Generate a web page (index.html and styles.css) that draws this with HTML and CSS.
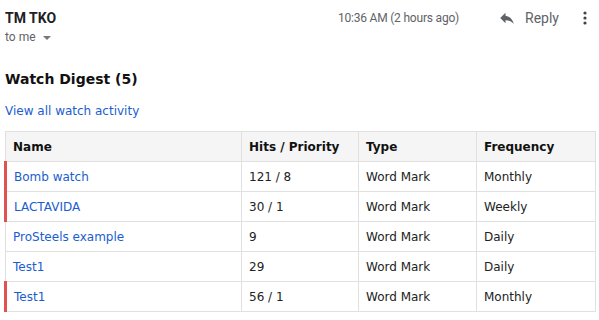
FILE: index.html
```html
<!DOCTYPE html>
<html>
<head>
<meta charset="utf-8">
<link rel="stylesheet" href="styles.css">
</head>
<body>
<div class="mail-head">
  <div class="sender">
    <div class="sender-name">TM TKO</div>
    <div class="to-me">to me <span class="caret"></span></div>
  </div>
  <div class="head-right">
    <span class="time">10:36 AM (2 hours ago)</span>
    <span class="reply">
      <svg class="reply-icon" width="18" height="18" viewBox="0 0 24 24"><path d="M10 9V5l-7 7 7 7v-4.1c5 0 8.5 1.6 11 5.1-1-5-4-10-11-11z" fill="#5f6368"/></svg>
      Reply
    </span>
    <svg class="more" width="4" height="16" viewBox="0 0 4 16"><circle cx="2" cy="3" r="1.6" fill="#444"/><circle cx="2" cy="8" r="1.6" fill="#444"/><circle cx="2" cy="13" r="1.6" fill="#444"/></svg>
  </div>
</div>
<div class="digest">
  <h1 class="title">Watch Digest (5)</h1>
  <a class="view-all" href="#">View all watch activity</a>
  <table class="watch-table">
    <colgroup><col class="c1"><col class="c2"><col class="c3"><col class="c4"></colgroup>
    <thead>
      <tr><th>Name</th><th>Hits / Priority</th><th>Type</th><th>Frequency</th></tr>
    </thead>
    <tbody>
      <tr class="flag"><td><a href="#">Bomb watch</a></td><td>121 / 8</td><td>Word Mark</td><td>Monthly</td></tr>
      <tr class="flag"><td><a href="#">LACTAVIDA</a></td><td>30 / 1</td><td>Word Mark</td><td>Weekly</td></tr>
      <tr><td><a href="#">ProSteels example</a></td><td>9</td><td>Word Mark</td><td>Daily</td></tr>
      <tr><td><a href="#">Test1</a></td><td>29</td><td>Word Mark</td><td>Daily</td></tr>
      <tr class="flag"><td><a href="#">Test1</a></td><td>56 / 1</td><td>Word Mark</td><td>Monthly</td></tr>
    </tbody>
  </table>
</div>
</body>
</html>
```
FILE: styles.css
```css
body {
  margin: 0;
  padding: 0 5px;
  background: #fff;
  font-family: Roboto, Arial, sans-serif;
}
.mail-head {
  display: flex;
  justify-content: space-between;
  align-items: flex-start;
  padding-top: 9px;
}
.sender-name {
  font-size: 14px;
  font-weight: bold;
  color: #202124;
  line-height: 18px;
}
.to-me {
  font-size: 12px;
  color: #5f6368;
  line-height: 20px;
}
.caret {
  display: inline-block;
  width: 0;
  height: 0;
  border-left: 4px solid transparent;
  border-right: 4px solid transparent;
  border-top: 4px solid #777;
  margin-left: 4px;
  vertical-align: middle;
}
.head-right {
  display: flex;
  align-items: center;
  height: 18px;
  padding-right: 7px;
}
.time {
  font-size: 12px;
  color: #5f6368;
  letter-spacing: -0.2px;
}
.reply {
  display: flex;
  align-items: center;
  gap: 9px;
  font-size: 14px;
  color: #5f6368;
  margin-left: 39px;
}
.more {
  margin-left: 24px;
}
.digest {
  font-family: Verdana, "DejaVu Sans", sans-serif;
}
.title {
  font-size: 14px;
  font-weight: bold;
  margin: 22px 0 0;
  line-height: 20px;
  color: #111;
}
.view-all {
  display: block;
  margin-top: 14px;
  font-size: 12px;
  line-height: 16px;
  color: #1a5dd0;
  text-decoration: none;
}
.watch-table {
  margin-top: 12px;
  margin-left: -1px;
  width: 590px;
  border-collapse: collapse;
  table-layout: fixed;
  font-size: 12px;
  color: #222;
}
.c1 { width: 236px; }
.c2 { width: 117px; }
.c3 { width: 118px; }
.c4 { width: 119px; }
.watch-table th,
.watch-table td {
  border: 1px solid #e0e0e0;
  height: 29px;
  padding: 0 7px;
  text-align: left;
  white-space: nowrap;
}
.watch-table th {
  background: #f5f5f5;
  font-weight: bold;
  color: #111;
}
.watch-table a {
  color: #1a5dd0;
  text-decoration: none;
}
.watch-table tr.flag td:first-child {
  border-left: 3px solid #e05252;
}
```
